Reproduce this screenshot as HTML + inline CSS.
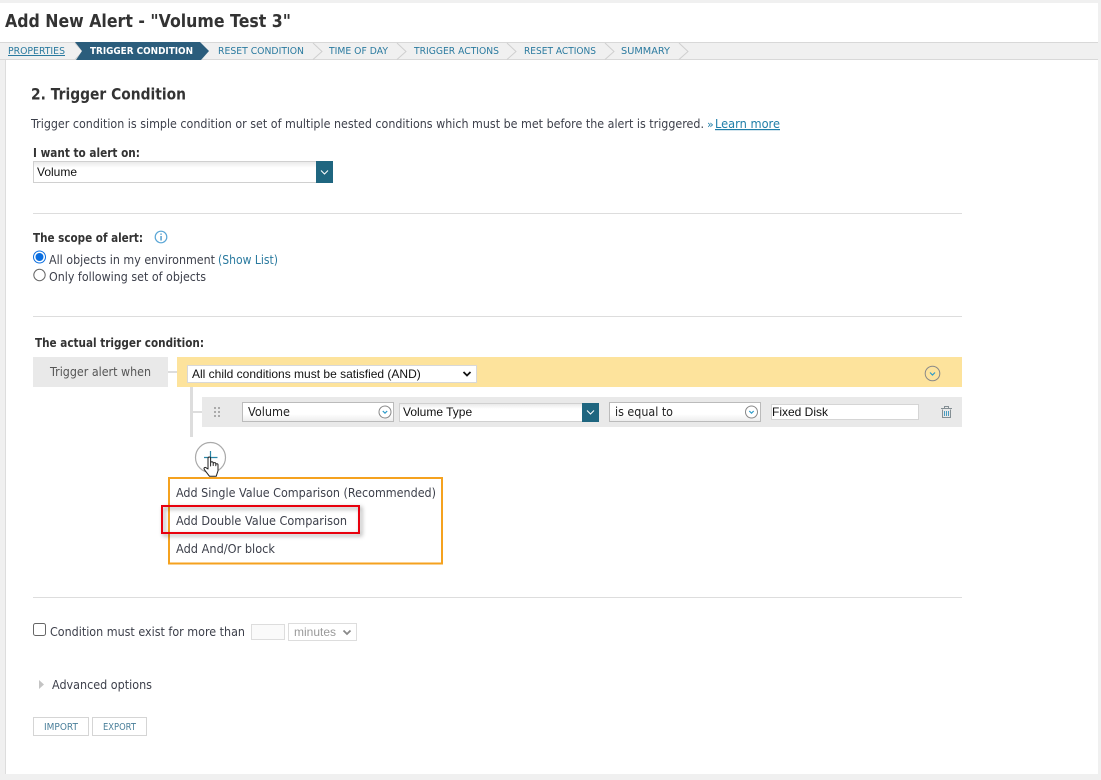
<!DOCTYPE html>
<html><head><meta charset="utf-8"><title>Add New Alert</title>
<style>
html,body{margin:0;padding:0;width:1101px;height:780px;overflow:hidden;background:#f0f0f0}
svg{display:block}
text{font-family:"DejaVu Sans","Liberation Sans",sans-serif;font-size:12px;fill:#3c3f4a}
.b{font-weight:bold;fill:#333}
.l{font-family:"Liberation Sans",sans-serif;font-size:12px;fill:#111}
.t{font-size:10px;fill:#2a7a9f}
</style></head><body>
<svg width="1101" height="780" viewBox="0 0 1101 780" xmlns="http://www.w3.org/2000/svg">
<defs>
<linearGradient id="g" x1="0" y1="0" x2="0" y2="1"><stop offset="0" stop-color="#e8e8e8"/><stop offset=".3" stop-color="#fff"/><stop offset="1" stop-color="#fff"/></linearGradient>
<linearGradient id="g2" x1="0" y1="0" x2="0" y2="1"><stop offset="0" stop-color="#fff"/><stop offset=".6" stop-color="#fff"/><stop offset="1" stop-color="#ececec"/></linearGradient>
<filter id="s" x="-5%" y="-30%" width="112%" height="170%"><feDropShadow dx="2" dy="2" stdDeviation="2" flood-color="#000" flood-opacity=".4"/></filter>
</defs>
<rect width="1101" height="780" fill="#f0f0f0"/>
<rect x="0" y="3" width="1098" height="39" fill="#fff"/>
<rect x="5" y="60" width="1093" height="714" fill="#fff"/>
<rect x="5" y="60" width="1" height="714" fill="#ddd"/>
<rect x="0" y="42" width="1098" height="1" fill="#d8d8d8"/>
<rect x="0" y="59" width="1098" height="1" fill="#d8d8d8"/>

<text x="5" y="27" class="b" style="font-size:18px" textLength="286" lengthAdjust="spacingAndGlyphs">Add New Alert - "Volume Test 3"</text>

<!-- breadcrumb -->
<path d="M313 43l9 8.500-9 8M397 43l9 8.500-9 8M507 43l9 8.500-9 8M605 43l9 8.500-9 8M679 43l9 8.500-9 8" fill="none" stroke="#cfcfcf" stroke-width="1"/>
<path d="M75 43l8 8.500-8 8" fill="none" stroke="#cfcfcf"/>
<polygon points="75,42 200,42 209,51 201,60 76,60 82,51" fill="#2b5d7c"/>
<text x="8" y="54" class="t" textLength="57" lengthAdjust="spacingAndGlyphs" text-decoration="underline">PROPERTIES</text>
<text x="90" y="54" class="t b" style="fill:#fff" textLength="103" lengthAdjust="spacingAndGlyphs">TRIGGER CONDITION</text>
<text x="218" y="54" class="t" textLength="86" lengthAdjust="spacingAndGlyphs">RESET CONDITION</text>
<text x="329" y="54" class="t" textLength="59" lengthAdjust="spacingAndGlyphs">TIME OF DAY</text>
<text x="414" y="54" class="t" textLength="85" lengthAdjust="spacingAndGlyphs">TRIGGER ACTIONS</text>
<text x="524" y="54" class="t" textLength="72" lengthAdjust="spacingAndGlyphs">RESET ACTIONS</text>
<text x="621" y="54" class="t" textLength="49" lengthAdjust="spacingAndGlyphs">SUMMARY</text>

<text x="31" y="99.500" class="b" style="font-size:16px" textLength="155" lengthAdjust="spacingAndGlyphs">2. Trigger Condition</text>
<text x="31" y="128" textLength="673" lengthAdjust="spacingAndGlyphs">Trigger condition is simple condition or set of multiple nested conditions which must be met before the alert is triggered.</text>
<text x="707" y="128" style="fill:#1f7ea8;font-size:11px">»</text>
<text x="715" y="128" style="fill:#1f7ea8" text-decoration="underline" textLength="65" lengthAdjust="spacingAndGlyphs">Learn more</text>

<text x="33" y="157" class="b" textLength="107" lengthAdjust="spacingAndGlyphs">I want to alert on:</text>
<rect x="33.500" y="161.500" width="299" height="21" fill="url(#g)" stroke="#d0d0d0"/>
<rect x="316" y="161" width="17" height="22" fill="#1f6680"/>
<path d="M321 170.500l3.500 3.500 3.500-3.500" fill="none" stroke="#fff" stroke-width="1"/>
<text x="37" y="176" class="l">Volume</text>

<rect x="33" y="213" width="929" height="1" fill="#ddd"/>
<text x="33" y="242" class="b" textLength="110" lengthAdjust="spacingAndGlyphs">The scope of alert:</text>
<circle cx="161" cy="237" r="5.800" fill="#fff" stroke="#5aa6d6" stroke-width="1.200"/>
<rect x="160.400" y="236" width="1.300" height="4.500" fill="#3d8fc4"/><rect x="160.400" y="233.500" width="1.300" height="1.300" fill="#3d8fc4"/>
<circle cx="39.500" cy="257" r="6" fill="#fff" stroke="#0a6ee0" stroke-width="1"/>
<circle cx="39.500" cy="257" r="4" fill="#0a6ee0"/>
<text x="49" y="264" textLength="166" lengthAdjust="spacingAndGlyphs">All objects in my environment</text>
<text x="218" y="264" style="fill:#2a7a9f" textLength="60" lengthAdjust="spacingAndGlyphs">(Show List)</text>
<circle cx="39.500" cy="275" r="5.700" fill="#fff" stroke="#666" stroke-width="1"/>
<text x="49" y="281" textLength="157" lengthAdjust="spacingAndGlyphs">Only following set of objects</text>

<rect x="33" y="316" width="929" height="1" fill="#ddd"/>
<text x="35" y="347" class="b" textLength="169" lengthAdjust="spacingAndGlyphs">The actual trigger condition:</text>

<rect x="33" y="357" width="135" height="30" fill="#e9e9e9"/>
<text x="50" y="376" style="fill:#555" textLength="101" lengthAdjust="spacingAndGlyphs">Trigger alert when</text>
<rect x="168" y="371" width="9" height="2" fill="#ddd"/>
<rect x="177" y="357" width="785" height="30" fill="#fde39c"/>
<rect x="187.500" y="365.500" width="289" height="17" fill="#fff" stroke="#d8d8d8"/>
<text x="192" y="378" class="l">All child conditions must be satisfied (AND)</text>
<path d="M463.500 372l3.500 3.500 3.500-3.500" fill="none" stroke="#111" stroke-width="1.800"/>
<circle cx="932.500" cy="373.500" r="7.300" fill="none" stroke="#888" stroke-width="1"/>
<path d="M930 372.500l2.500 2.500 2.500-2.500" fill="none" stroke="#2a9ac8" stroke-width="1.200"/>

<rect x="190" y="387" width="3" height="50" fill="#ddd"/>
<rect x="193" y="411" width="9" height="2" fill="#ddd"/>
<rect x="202" y="397" width="760" height="30" fill="#e9e9e9"/>
<g fill="#aaa">
<rect x="214" y="407" width="2" height="2"/><rect x="218" y="407" width="2" height="2"/>
<rect x="214" y="411" width="2" height="2"/><rect x="218" y="411" width="2" height="2"/>
<rect x="214" y="415" width="2" height="2"/><rect x="218" y="415" width="2" height="2"/>
</g>
<rect x="242.500" y="402.500" width="151" height="19" fill="url(#g2)" stroke="#bbb"/>
<text x="248" y="416" style="fill:#222" textLength="42" lengthAdjust="spacingAndGlyphs">Volume</text>
<circle cx="385" cy="412" r="6" fill="#fff" stroke="#888"/>
<path d="M382.800 411l2.200 2.200 2.200-2.200" fill="none" stroke="#2a9ac8" stroke-width="1.200"/>
<rect x="399.500" y="403.500" width="199" height="18" fill="url(#g)" stroke="#d0d0d0"/>
<rect x="582" y="403" width="17" height="19" fill="#1f6680"/>
<path d="M587 410.500l3.500 3.500 3.500-3.500" fill="none" stroke="#fff" stroke-width="1"/>
<text x="403" y="416" class="l">Volume Type</text>
<rect x="609.500" y="402.500" width="151" height="19" fill="url(#g2)" stroke="#bbb"/>
<text x="615" y="416" style="fill:#222" textLength="58" lengthAdjust="spacingAndGlyphs">is equal to</text>
<circle cx="751.500" cy="412" r="6" fill="#fff" stroke="#888"/>
<path d="M749.300 411l2.200 2.200 2.200-2.200" fill="none" stroke="#2a9ac8" stroke-width="1.200"/>
<rect x="771.500" y="404.500" width="147" height="15" fill="#fff" stroke="#d5d5d5"/>
<text x="772" y="416" class="l">Fixed Disk</text>
<g fill="none" stroke="#858f94" stroke-width="1">
<path d="M941 408.500h11M944.500 408.500v-2h4v2"/>
<path d="M942.500 409.500v8h8v-8"/>
</g>
<path d="M944.500 411v5M946.500 411v5M948.500 411v5" stroke="#4a9cc0" stroke-width="1"/>

<!-- add button -->
<circle cx="210.500" cy="457.500" r="15" fill="#fff" stroke="#aaa" stroke-width="1.200"/>
<path d="M204 457.500h13.500M210.500 451v13" stroke="#2b87a8" stroke-width="1.200" fill="none"/>
<path d="M208 469v-10.500q0-1.500 1.300-1.500t1.300 1.500v7.500v-3q0-1.300 1.300-1.300t1.300 1.300v2.500-1.700q0-1.200 1.300-1.200t1.300 1.200v2-1q0-1.100 1.100-1.100t1.100 1.100v6l-1.800 5.500h-6.700l-5-6.500q-1-1.500 0-2.200t2 .500z" fill="#fff" stroke="#222" stroke-width="1" stroke-linejoin="round"/>

<!-- menu -->
<rect x="169" y="478" width="273" height="85.500" fill="none" stroke="#f5a21f" stroke-width="2"/>
<text x="176" y="497" textLength="260" lengthAdjust="spacingAndGlyphs">Add Single Value Comparison (Recommended)</text>
<rect x="162" y="506" width="197" height="27" fill="none" stroke="#e8000f" stroke-width="2" filter="url(#s)"/>
<text x="176" y="525" textLength="171" lengthAdjust="spacingAndGlyphs">Add Double Value Comparison</text>
<text x="176" y="553" textLength="99" lengthAdjust="spacingAndGlyphs">Add And/Or block</text>

<rect x="33" y="597" width="929" height="1" fill="#ddd"/>
<rect x="33.500" y="623.500" width="12" height="12" rx="2" fill="#fff" stroke="#666"/>
<text x="50" y="636" textLength="195" lengthAdjust="spacingAndGlyphs">Condition must exist for more than</text>
<rect x="251.500" y="624.500" width="33" height="15" fill="#fafafa" stroke="#ddd"/>
<rect x="288.500" y="623.500" width="68" height="17" fill="#fff" stroke="#ddd"/>
<text x="294" y="636" class="l" style="fill:#999">minutes</text>
<path d="M343.500 630.500l3.500 3.500 3.500-3.500" fill="none" stroke="#888" stroke-width="1.800"/>
<polygon points="39,680 44,684.500 39,689" fill="#c4c4c4"/>
<text x="52" y="689" textLength="100" lengthAdjust="spacingAndGlyphs">Advanced options</text>
<rect x="33.500" y="717.500" width="55" height="18" fill="#fff" stroke="#d5d5d5"/>
<rect x="92.500" y="717.500" width="54" height="18" fill="#fff" stroke="#d5d5d5"/>
<text x="44" y="730" class="t" style="fill:#4a7f9a" textLength="34" lengthAdjust="spacingAndGlyphs">IMPORT</text>
<text x="103" y="730" class="t" style="fill:#4a7f9a" textLength="33" lengthAdjust="spacingAndGlyphs">EXPORT</text>
</svg>
</body></html>
